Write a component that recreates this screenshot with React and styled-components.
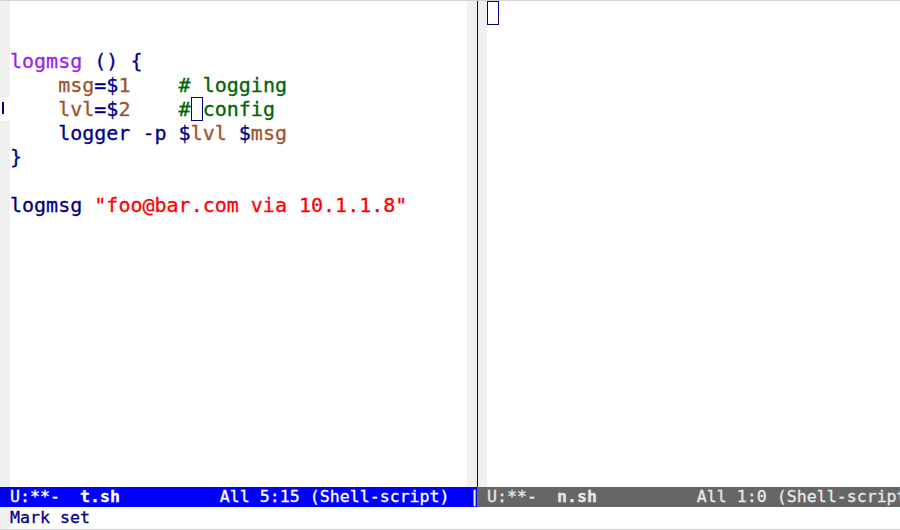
import React from 'react';
import styled, { createGlobalStyle } from 'styled-components';

const Global = createGlobalStyle`
  html, body { margin: 0; padding: 0; background: #ffffff; }
  body { width: 900px; height: 530px; overflow: hidden; }
`;

const Frame = styled.div`
  width: 900px;
  height: 530px;
  box-sizing: border-box;
  border-top: 1px solid #d3d3d3;
  border-bottom: 1px solid #d3d3d3;
  display: flex;
  flex-direction: column;
  overflow: hidden;
  font-family: "DejaVu Sans Mono", monospace;
  -webkit-text-stroke: 0.3px currentColor;
  background: #ffffff;
`;

const Windows = styled.div`
  display: flex;
  height: 506px;
  flex: none;
`;

const Window = styled.div`
  display: flex;
  flex-direction: column;
  width: ${p => p.$w}px;
  flex: none;
  overflow: hidden;
`;

const Body = styled.div`
  display: flex;
  height: 486px;
  flex: none;
  ${p => (p.$divider ? 'border-left: 1px solid #00008b;' : '')}
`;

const Fringe = styled.div`
  width: ${p => p.$w}px;
  flex: none;
  background: #f0f0f0;
  display: flex;
  flex-direction: column;
`;

const FringeGap = styled.div`
  height: ${p => p.$h}px;
  flex: none;
`;

const FringeMarkCell = styled.div`
  height: 24px;
  flex: none;
  background: #ffffff;
  display: flex;
  align-items: flex-start;
`;

const FringeBar = styled.div`
  width: 2px;
  height: 12px;
  margin: 5px 0 0 2px;
  background: #00008b;
`;

const Text = styled.div`
  flex: 1;
  min-width: 0;
  font-size: 20px;
  line-height: 24px;
  color: #00008b;
  white-space: pre;
  overflow: hidden;
`;

const Line = styled.div`
  height: 24px;
`;

const Fn = styled.span`color: #a020f0;`;
const Var = styled.span`color: #a0522d;`;
const Comment = styled.span`color: #006400;`;
const Str = styled.span`color: #ff0000;`;

const Cursor = styled.span`
  display: inline-block;
  width: 1ch;
  height: 24px;
  vertical-align: top;
  box-sizing: border-box;
  border: 1px solid #00008b;
`;

const ModeLine = styled.div`
  height: 20px;
  flex: none;
  line-height: 20px;
  font-size: 16.6px;
  white-space: pre;
  overflow: hidden;
  background: ${p => (p.$active ? '#0000ff' : '#666666')};
  color: ${p => (p.$active ? '#ffffff' : '#e8e8e8')};
`;

const Buf = styled.span`font-weight: bold;`;

const Echo = styled.div`
  display: flex;
  height: 22px;
  flex: none;
`;

const EchoText = styled.div`
  flex: 1;
  padding-top: 1px;
  font-size: 16.6px;
  line-height: 20px;
  color: #00008b;
  white-space: pre;
`;

export default function App() {
  return (
    <>
      <Global />
      <Frame>
        <Windows>
          <Window $w={477}>
            <Body>
              <Fringe $w={10}>
                <FringeGap $h={96} />
                <FringeMarkCell><FringeBar /></FringeMarkCell>
              </Fringe>
              <Text>
                <Line>{' '}</Line>
                <Line>{' '}</Line>
                <Line><Fn>logmsg</Fn>{' () {'}</Line>
                <Line>{'    '}<Var>msg</Var>{'=$'}<Var>1</Var>{'    '}<Comment># logging</Comment></Line>
                <Line>{'    '}<Var>lvl</Var>{'=$'}<Var>2</Var>{'    '}<Comment>#</Comment><Cursor /><Comment>config</Comment></Line>
                <Line>{'    logger -p $'}<Var>lvl</Var>{' $'}<Var>msg</Var></Line>
                <Line>{'}'}</Line>
                <Line>{' '}</Line>
                <Line>{'logmsg '}<Str>"foo@bar.com via 10.1.1.8"</Str></Line>
              </Text>
              <Fringe $w={10} />
            </Body>
            <ModeLine $active>
              {' U:**-  '}<Buf>t.sh</Buf>{'          All 5:15 (Shell-script)  |'}
            </ModeLine>
          </Window>
          <Window $w={423}>
            <Body $divider>
              <Fringe $w={9} />
              <Text>
                <Line><Cursor /></Line>
              </Text>
            </Body>
            <ModeLine>
              {' U:**-  '}<Buf>n.sh</Buf>{'          All 1:0 (Shell-script)  ----------'}
            </ModeLine>
          </Window>
        </Windows>
        <Echo>
          <Fringe $w={10} />
          <EchoText>Mark set</EchoText>
        </Echo>
      </Frame>
    </>
  );
}
